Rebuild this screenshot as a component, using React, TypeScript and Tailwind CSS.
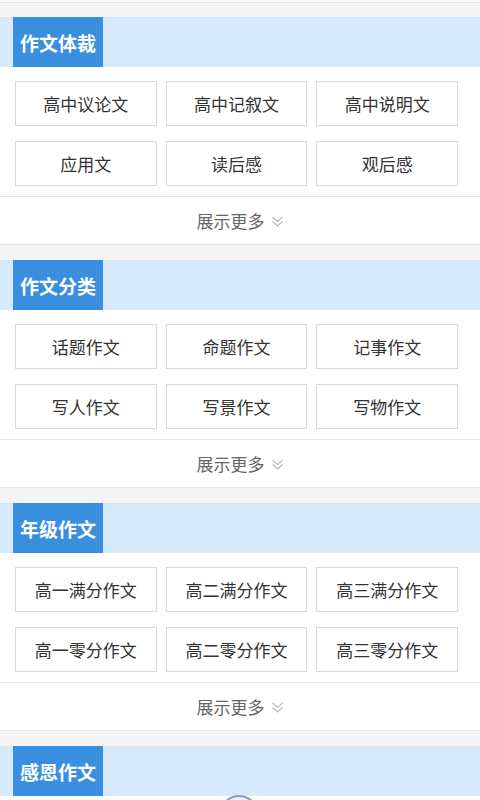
import React from "react";

const sections: { title: string; items: string[] }[] = [
  { title: "作文体裁", items: ["高中议论文", "高中记叙文", "高中说明文", "应用文", "读后感", "观后感"] },
  { title: "作文分类", items: ["话题作文", "命题作文", "记事作文", "写人作文", "写景作文", "写物作文"] },
  { title: "年级作文", items: ["高一满分作文", "高二满分作文", "高三满分作文", "高一零分作文", "高二零分作文", "高三零分作文"] },
];

function Chevrons() {
  return (
    <svg width="13" height="13" viewBox="0 0 13 13" fill="none" stroke="#b8b8b8" strokeWidth="1.1" className="ml-[6px] mt-[2px]">
      <polyline points="1.5,2 6.5,6.5 11.5,2" />
      <polyline points="1.5,6.5 6.5,11 11.5,6.5" />
    </svg>
  );
}

function Header({ title }: { title: string }) {
  return (
    <div className="h-[50px] bg-[#d6eafb] pl-[13px] flex">
      <div className="h-full px-[7px] bg-[#3a8ee0] text-white text-[19px] font-bold flex items-center leading-none">
        {title}
      </div>
    </div>
  );
}

export default function App() {
  return (
    <div
      className="relative w-[480px] h-[800px] overflow-hidden bg-[#f5f5f5]"
      style={{ fontFamily: '"Noto Sans CJK SC", "Noto Sans", sans-serif' }}
    >
      <div className="h-[3px] bg-[#fbfbfb] border-b border-[#e6e6e6]" />
      <div className="h-[14px]" />
      {sections.map((s) => (
        <div key={s.title} className="bg-white">
          <Header title={s.title} />
          <div className="pt-[14px] pb-[10px] pl-[15px] pr-[22px] grid grid-cols-3 gap-x-[9px] gap-y-[15px]">
            {s.items.map((it) => (
              <div
                key={it}
                className="h-[45px] border border-[#d9d9d9] bg-white flex items-center justify-center text-[17px] text-[#333] leading-none"
              >
                {it}
              </div>
            ))}
          </div>
          <div className="border-t border-[#e6e6e6] h-[48px] flex items-center justify-center text-[17px] text-[#666] leading-none">
            <span>展示更多</span>
            <Chevrons />
          </div>
          <div className="border-t border-[#e6e6e6] h-[16px] bg-[#f5f5f5]" />
        </div>
      ))}
      <div className="bg-white h-[60px]">
        <Header title="感恩作文" />
      </div>
      <div className="absolute left-[219px] top-[795px] w-[40px] h-[40px] rounded-full border-2 border-[#8aa2bc] bg-[#e9f3fc]" />
    </div>
  );
}
